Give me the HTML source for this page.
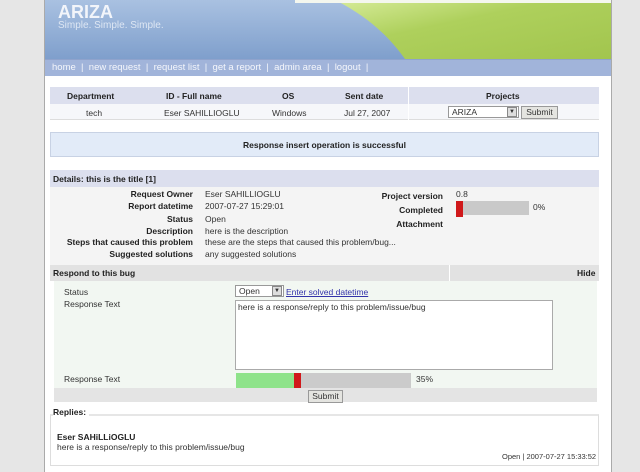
<!DOCTYPE html>
<html><head><meta charset="utf-8"><style>
*{margin:0;padding:0;box-sizing:border-box}
body{width:640px;height:472px;background:#e6e6e6;font-family:"Liberation Sans",sans-serif;font-size:8.5px;color:#333;position:relative;overflow:hidden}
.a{position:absolute;white-space:nowrap}
.b{font-weight:bold;color:#222}
.r{text-align:right}
</style></head><body>
<div class="a" style="left:44px;top:0;width:568px;height:472px;background:#fff;border-left:1px solid #aaa;border-right:1px solid #aaa"></div>
<svg class="a" style="left:45px;top:0" width="566" height="59">
<defs><linearGradient id="g" x1="0" y1="0" x2="0" y2="1"><stop offset="0" stop-color="#a9c1e1"/><stop offset="1" stop-color="#7f9fcc"/></linearGradient>
<linearGradient id="gg" x1="0" y1="0" x2="1" y2="1"><stop offset="0" stop-color="#d7ec9a"/><stop offset=".4" stop-color="#aed05c"/><stop offset="1" stop-color="#a2c54e"/></linearGradient></defs>
<rect width="566" height="59" fill="url(#g)"/>
<path d="M290 0 C330 20 350 45 360 59 L566 59 L566 0 Z" fill="url(#gg)"/>
<rect x="250" y="0" width="316" height="3" fill="#f4f7ee"/>
</svg>
<div class="a" style="left:58px;top:2px;font-size:18px;font-weight:bold;color:#f2f5fa">ARIZA</div>
<div class="a" style="left:58px;top:20px;font-size:10px;color:#dde6f3">Simple. Simple. Simple.</div>
<div class="a" style="left:45px;top:59px;width:566px;height:17px;background:#a1b4da;border-top:1px solid #8fa3cc"></div>
<div class="a" style="left:52px;top:62px;font-size:9.5px;color:#f4f6fb">home &nbsp;|&nbsp; new request &nbsp;|&nbsp; request list &nbsp;|&nbsp; get a report &nbsp;|&nbsp; admin area &nbsp;|&nbsp; logout &nbsp;|</div>

<div class="a" style="left:50px;top:87px;width:549px;height:17px;background:#dcdfee"></div>
<div class="a" style="left:50px;top:104px;width:549px;height:16px;background:#f6f7fa;border-bottom:1px solid #ddd"></div>
<div class="a b" style="left:67px;top:91px">Department</div>
<div class="a b" style="left:166px;top:91px">ID - Full name</div>
<div class="a b" style="left:282px;top:91px">OS</div>
<div class="a b" style="left:345px;top:91px">Sent date</div>
<div class="a b" style="left:486px;top:91px">Projects</div>
<div class="a" style="left:86px;top:108px">tech</div>
<div class="a" style="left:164px;top:108px">Eser SAHILLIOGLU</div>
<div class="a" style="left:272px;top:108px">Windows</div>
<div class="a" style="left:344px;top:108px">Jul 27, 2007</div>
<div class="a" style="left:408px;top:87px;width:1px;height:33px;background:#fff"></div>
<div class="a" style="left:448px;top:106px;width:71px;height:12px;border:1px solid #999;background:#fff;padding-left:3px;line-height:10px">ARIZA</div>
<div class="a" style="left:507px;top:107px;width:10px;height:10px;background:#ddd;border:1px solid #888;font-size:6px;text-align:center;line-height:8px">▼</div>
<div class="a" style="left:521px;top:106px;width:37px;height:13px;background:#e4e4e0;border:1px solid #999;text-align:center;line-height:11px">Submit</div>

<div class="a" style="left:50px;top:132px;width:549px;height:25px;background:#e2ebf8;border:1px solid #c8d2e4"></div>
<div class="a b" style="left:50px;top:140px;width:549px;text-align:center">Response insert operation is successful</div>

<div class="a" style="left:50px;top:170px;width:549px;height:17px;background:#dcdfee"></div>
<div class="a b" style="left:53px;top:174px">Details: this is the title [1]</div>
<div class="a" style="left:50px;top:187px;width:549px;height:78px;background:#f4f4f4"></div>
<div class="a b r" style="left:50px;top:189px;width:143px;line-height:11.5px">Request Owner<br>Report datetime<br><div style="height:2px"></div>Status<br>Description<br>Steps that caused this problem<br>Suggested solutions</div>
<div class="a" style="left:205px;top:189px;line-height:11.5px">Eser SAHILLIOGLU<br>2007-07-27 15:29:01<br><div style="height:2px"></div>Open<br>here is the description<br>these are the steps that caused this problem/bug...<br>any suggested solutions</div>
<div class="a b r" style="left:300px;top:189px;width:143px;line-height:14px">Project version<br>Completed<br>Attachment</div>
<div class="a" style="left:456px;top:189px">0.8</div>
<div class="a" style="left:456px;top:201px;width:73px;height:14px;background:#c9c9c9"></div>
<div class="a" style="left:456px;top:201px;width:7px;height:16px;background:#d0191b"></div>
<div class="a" style="left:533px;top:202px">0%</div>

<div class="a" style="left:50px;top:265px;width:549px;height:16px;background:#e2e2e2"></div>
<div class="a" style="left:449px;top:265px;width:1px;height:16px;background:#fff"></div>
<div class="a b" style="left:53px;top:268px">Respond to this bug</div>
<div class="a b" style="left:577px;top:268px">Hide</div>

<div class="a" style="left:54px;top:281px;width:543px;height:112px;background:#f2f7f2"></div>
<div class="a" style="left:64px;top:287px">Status</div>
<div class="a" style="left:64px;top:299px">Response Text</div>
<div class="a" style="left:64px;top:374px">Response Text</div>
<div class="a" style="left:235px;top:285px;width:49px;height:12px;border:1px solid #999;background:#fff;padding-left:3px;line-height:10px">Open</div>
<div class="a" style="left:272px;top:286px;width:10px;height:10px;background:#ddd;border:1px solid #888;font-size:6px;text-align:center;line-height:8px">▼</div>
<div class="a" style="left:286px;top:287px;color:#33a;text-decoration:underline">Enter solved datetime</div>
<div class="a" style="left:235px;top:300px;width:318px;height:70px;border:1px solid #aaa;background:#fff;padding:1px 2px">here is a response/reply to this problem/issue/bug</div>
<div class="a" style="left:236px;top:373px;width:175px;height:15px;background:#cbcbcb"></div>
<div class="a" style="left:236px;top:373px;width:58px;height:15px;background:#8ee38a"></div>
<div class="a" style="left:294px;top:373px;width:7px;height:18px;background:#d0191b"></div>
<div class="a" style="left:416px;top:374px">35%</div>
<div class="a" style="left:54px;top:388px;width:543px;height:14px;background:#e4e4e4"></div>
<div class="a" style="left:308px;top:390px;width:35px;height:13px;background:#e4e4e0;border:1px solid #999;text-align:center;line-height:11px">Submit</div>

<div class="a" style="left:50px;top:414px;width:549px;height:52px;border:1px solid #ddd;border-top:2px solid #e6e6e6"></div>
<div class="a b" style="left:53px;top:407px;background:#fff;padding-right:3px">Replies:</div>
<div class="a b" style="left:57px;top:432px">Eser SAHiLLiOGLU</div>
<div class="a" style="left:57px;top:442px">here is a response/reply to this problem/issue/bug</div>
<div class="a" style="left:502px;top:452px;font-size:7.5px">Open | 2007-07-27 15:33:52</div>
</body></html>
